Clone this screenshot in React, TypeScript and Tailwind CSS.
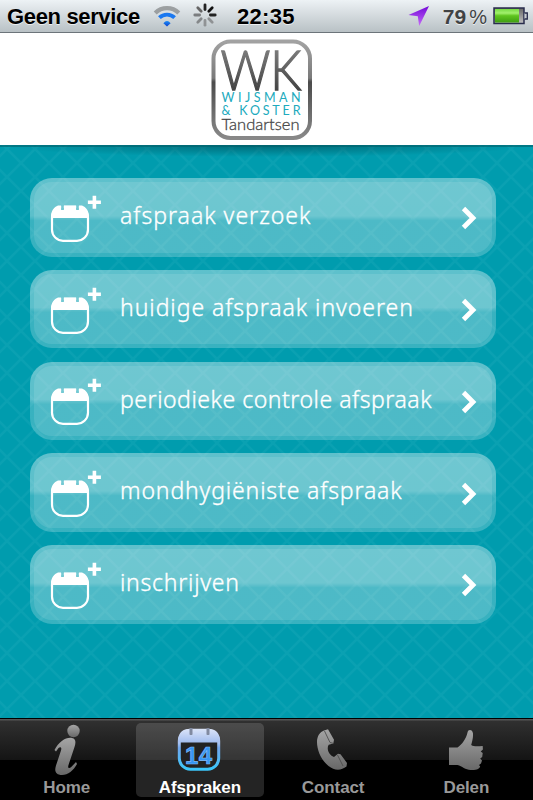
import type { ReactNode } from "react";

/* ── Status bar ─────────────────────────────────────────── */

function WifiIcon() {
  return (
    <svg width="28" height="22" viewBox="0 0 28 22" className="shrink-0">
      <defs>
        <linearGradient id="wifi" x1="0" y1="0" x2="0" y2="1">
          <stop offset="0" stopColor="#1d8cf5" />
          <stop offset="1" stopColor="#0a3fd0" />
        </linearGradient>
      </defs>
      <path d="M2.200 8a16.800 16.800 0 0 1 23.600 0" fill="none" stroke="#9b9fa1" strokeWidth="4.200" />
      <path d="M6.400 12.700a10.700 10.700 0 0 1 15.200 0" fill="none" stroke="#1a78f0" strokeWidth="3.800" />
      <path d="M14 21.500l-3.600-3.300q3.600-4.200 7.200 0z" fill="url(#wifi)" />
    </svg>
  );
}

const SPOKES = ["#222", "#111", "#222", "#8f9294", "#909395", "#85888a", "#7a7d7f", "#666"];

function Spinner() {
  return (
    <svg width="24" height="24" viewBox="-12 -12 24 24" className="shrink-0">
      {SPOKES.map((color, i) => (
        <line
          key={i}
          x1="0"
          y1="-5.4"
          x2="0"
          y2="-10.2"
          stroke={color}
          strokeWidth="2.8"
          strokeLinecap="round"
          transform={`rotate(${i * 45})`}
        />
      ))}
    </svg>
  );
}

function LocationArrow() {
  return (
    <svg width="22" height="22" viewBox="0 0 22 22" className="shrink-0">
      <defs>
        <linearGradient id="loc" x1="0" y1="0" x2="0" y2="1">
          <stop offset="0" stopColor="#7308d8" />
          <stop offset="1" stopColor="#c66cf8" />
        </linearGradient>
      </defs>
      <path d="M21 1L0.500 10l9.300 1.300L11.200 21z" fill="url(#loc)" />
    </svg>
  );
}

function Battery() {
  return (
    <svg width="36" height="18" viewBox="0 0 36 18" className="shrink-0">
      <defs>
        <linearGradient id="charge" x1="0" y1="0" x2="0" y2="1">
          <stop offset="0" stopColor="#77dc43" />
          <stop offset="0.3" stopColor="#a2f06d" />
          <stop offset="0.5" stopColor="#5fc51f" />
          <stop offset="1" stopColor="#3f9e12" />
        </linearGradient>
        <linearGradient id="empty" x1="0" y1="0" x2="0" y2="1">
          <stop offset="0" stopColor="#666" />
          <stop offset="1" stopColor="#c3c3c3" />
        </linearGradient>
      </defs>
      <rect x="1" y="1" width="30" height="15.5" fill="url(#empty)" stroke="#282d4c" strokeWidth="1.5" />
      <rect x="2" y="2" width="24" height="13.5" fill="url(#charge)" />
      <path d="M31.5 6h2.8v6h-2.8" fill="#c8cccf" stroke="#282d4c" strokeWidth="1.3" />
    </svg>
  );
}

function StatusBar() {
  return (
    <div className="flex h-[33px] items-center border-b border-[#6c747a] bg-linear-to-b from-[#edf2f5] to-[#b9c1c5] pl-[7px] pr-[4px] text-[22px] font-bold leading-none text-black [text-shadow:0_1px_0_rgba(255,255,255,0.7)]">
      <span className="w-[146px] shrink-0 whitespace-nowrap pt-[2px] tracking-[-0.35px]">Geen service</span>
      <WifiIcon />
      <span className="ml-[12px] mt-[-3px]">
        <Spinner />
      </span>
      <span className="ml-[20px] pt-[2px] tracking-[0.3px]">22:35</span>
      <span className="ml-auto">
        <LocationArrow />
      </span>
      <span className="ml-[13px] mr-[6px] whitespace-nowrap pt-[1px] text-[21px] text-[#404244]">
        79<span className="ml-[3px] text-[20px] font-normal">%</span>
      </span>
      <Battery />
    </div>
  );
}

/* ── Logo ───────────────────────────────────────────────── */

function Logo() {
  return (
    <svg width="102" height="102" viewBox="0 0 102 102" className="overflow-visible">
      <defs>
        <linearGradient id="frame" x1="0" y1="0" x2="0" y2="1">
          <stop offset="0" stopColor="#a2a2a2" />
          <stop offset="0.38" stopColor="#7a7a7a" />
          <stop offset="0.42" stopColor="#4b4b4b" />
          <stop offset="1" stopColor="#888" />
        </linearGradient>
        <linearGradient id="wk" x1="0" y1="0" x2="0" y2="1">
          <stop offset="0.2" stopColor="#7c7c7c" />
          <stop offset="0.8" stopColor="#454545" />
        </linearGradient>
      </defs>
      <rect x="2.5" y="2.5" width="96.5" height="96.5" rx="17" fill="#fff" stroke="url(#frame)" strokeWidth="4" />
      <g fontFamily="Lato, 'Liberation Sans', sans-serif">
        <text x="9.500" y="50.500" fontSize="55" fontWeight="300" textLength="81" lengthAdjust="spacingAndGlyphs" fill="url(#wk)" stroke="url(#wk)" strokeWidth="1.300">
          WK
        </text>
        <text x="10.500" y="63.300" fontSize="12.500" textLength="79" fill="#20aabd">
          WIJSMAN
        </text>
        <text x="10.500" y="75.500" fontSize="12.500" textLength="79" fill="#20aabd">
          &amp; KOSTER
        </text>
        <text x="10.500" y="91" fontSize="16" fontWeight="300" textLength="78" lengthAdjust="spacingAndGlyphs" fill="#3c3c3c" stroke="#4c4c4c" strokeWidth="0.300">
          Tandartsen
        </text>
      </g>
    </svg>
  );
}

/* ── Menu ───────────────────────────────────────────────── */

function CalendarPlus() {
  return (
    <svg width="52" height="50" viewBox="0 0 52 50" className="mt-[3px] shrink-0">
      <rect x="2" y="12.8" width="36" height="34" rx="11" fill="none" stroke="#fff" strokeWidth="2.2" />
      <path
        d="M1 24v-1.500c0-5.500 3-9.500 7-11h3.200v4.500h2.600v-4.500h12.400v4.500h2.600v-4.500h3.200c4 1.500 7 5.500 7 11v1.500z"
        fill="#fff"
      />
      <path d="M11.200 11h2.600v4.500h-2.600zM26.200 11h2.600v4.500h-2.600z" fill="#74c9d3" />
      <path d="M42.600 1.800h3.600v4.700h4.700v3.600h-4.700v4.700h-3.600v-4.700h-4.700v-3.600h4.700z" fill="#fff" />
    </svg>
  );
}

function Chevron() {
  return (
    <svg width="16" height="24" viewBox="0 0 16 24" className="mt-[2px] shrink-0">
      <path d="M2.500 2.500l9.500 9.500-9.500 9.500" fill="none" stroke="#fff" strokeWidth="4.800" />
    </svg>
  );
}

interface MenuItem {
  label: string;
  spacing: string;
}

const ITEMS: MenuItem[] = [
  { label: "afspraak verzoek", spacing: "tracking-[1px]" },
  { label: "huidige afspraak invoeren", spacing: "tracking-[0.95px]" },
  { label: "periodieke controle afspraak", spacing: "tracking-[0.53px]" },
  { label: "mondhygiëniste afspraak", spacing: "tracking-[0.85px]" },
  { label: "inschrijven", spacing: "tracking-[0.75px]" },
];

function MenuButton({ label, spacing }: MenuItem) {
  return (
    <button className="h-[78.5px] w-full rounded-[22px] bg-linear-to-b from-white/37 from-0% via-white/36 via-48% to-white/22 to-54% p-[4px] text-left">
      <span className="flex h-full items-center rounded-[18px] bg-white/11 pl-[16px] pr-[15px]">
        <CalendarPlus />
        <span
          className={`ml-[18px] mt-[-4px] flex-1 whitespace-nowrap font-['Noto_Sans','Open_Sans',sans-serif] text-[23px] font-light text-white [-webkit-text-stroke:0.35px_white] ${spacing}`}
        >
          {label}
        </span>
        <Chevron />
      </span>
    </button>
  );
}

/* ── Tab bar ────────────────────────────────────────────── */

function TabGradient() {
  return (
    <svg width="0" height="0" className="absolute">
      <defs>
        <linearGradient id="tab" x1="0" y1="0" x2="0" y2="1">
          <stop offset="0" stopColor="#a5a5a5" />
          <stop offset="1" stopColor="#686868" />
        </linearGradient>
        <linearGradient id="tabBlue" x1="0" y1="0" x2="0" y2="1">
          <stop offset="0" stopColor="#dbe4f8" />
          <stop offset="0.3" stopColor="#b5c9f1" />
          <stop offset="0.45" stopColor="#72a7ed" />
          <stop offset="1" stopColor="#3bc6fa" />
        </linearGradient>
        <linearGradient id="tabBand" x1="0" y1="0" x2="0" y2="1">
          <stop offset="0" stopColor="#dbe4f8" />
          <stop offset="1" stopColor="#a3bdee" />
        </linearGradient>
      </defs>
    </svg>
  );
}

function InfoIcon() {
  return (
    <svg width="28" height="52" viewBox="0 0 28 52">
      <circle cx="20.500" cy="7" r="6.200" fill="url(#tab)" />
      <path
        d="M1.500 26C6 17.500 13 13 19 14c4 .8 4 4.500 2.500 9L15.500 41c-1 3 .5 3.800 2.500 2.300l5-5.300 1 2C20.500 46.500 15 51 9 51c-6 0-8-3.500-6-9.500L8 26.500c1-3-.5-4-2.500-2.500L3 27.500z"
        fill="url(#tab)"
      />
    </svg>
  );
}

function CalendarIcon() {
  return (
    <svg width="44" height="44" viewBox="0 0 44 44" className="mr-[2px]">
      <rect x="2.3" y="2.3" width="39.4" height="38.9" rx="11" fill="#222" stroke="url(#tabBlue)" strokeWidth="3" />
      <path d="M1 13Q1.500 1 12 1h20q10.500 0 11 12v1.500H1z" fill="url(#tabBand)" />
      <path d="M12.500 0v6.500q1.500 1 3 0V0M29.500 0v6.500q1.500 1 3 0V0" fill="#818aa0" />
      <text
        x="8"
        y="35.5"
        fontSize="24"
        fontWeight="700"
        textLength="27"
        fontFamily="'Liberation Sans', sans-serif"
        fill="#3595f4"
        stroke="#7fb9f8"
        strokeWidth="0.7"
      >
        14
      </text>
    </svg>
  );
}

function PhoneIcon() {
  return (
    <svg width="32" height="42" viewBox="0 0 32 42">
      <path
        d="M7 1.500l4-1.300 6 10.500-.7 3.800-4.600 1.200c-2.200 3.200-.7 9.800 5.300 12.200l4-3.200 2.500.5L30 34l-.5 3.500c-5 4-12 4.500-18-.5C4 31 0 21 0 13 0 7 3 3 7 1.500z"
        fill="url(#tab)"
      />
      <path d="M7.500 2l5.500 11.500 3.200.8M20.500 26l5.500 11" fill="none" stroke="#4d4d4d" strokeWidth="0.9" />
    </svg>
  );
}

function ThumbIcon() {
  return (
    <svg width="36" height="42" viewBox="0 0 36 42">
      <path
        d="M1 18.500h8.500C14 15.500 18 10 19.500 3.500 20 0 24.500.2 25 4.500c.3 4-.8 8-1.800 11.500 3 2 7 1.200 11.500 1l.2 3.500-2.200 2 2 1.500-.5 4-2 1.500 1.800 2-1 3-2 1.500 1.200 1.500c-1 3-4.700 3.500-9.700 3.500-5 0-8.500-4-13-5H1z"
        fill="url(#tab)"
      />
    </svg>
  );
}

function Tab({ label, icon, active }: { label: string; icon: ReactNode; active?: boolean }) {
  return (
    <div
      className={`mx-[3px] mb-[3px] mt-[4px] flex flex-1 flex-col items-center justify-between rounded-[5px] ${
        active ? "bg-white/14 text-white" : "text-[#999]"
      }`}
    >
      <div className="flex h-[54px] items-center justify-center">{icon}</div>
      <span className="pb-[1px] text-[17px] font-bold leading-[17px] tracking-[-0.1px]">{label}</span>
    </div>
  );
}

/* ── Screen ─────────────────────────────────────────────── */

export default function App() {
  return (
    <div className="flex h-[800px] w-[533px] flex-col overflow-hidden bg-white font-['Liberation_Sans',Arial,sans-serif]">
      <StatusBar />

      <header className="flex h-[112px] shrink-0 justify-center bg-white pr-[10px] pt-[6px]">
        <Logo />
      </header>

      <main className="relative flex-1 bg-[#009cae]">
        {/* Diamond lattice */}
        <svg className="absolute inset-0 h-full w-full">
          <defs>
            <pattern id="lattice" width="28" height="28" patternUnits="userSpaceOnUse" x="7" y="4">
              <path d="M-2 -2L30 30M-2 30L30 -2" stroke="#1aa8b9" strokeOpacity="0.4" strokeWidth="2.6" />
            </pattern>
          </defs>
          <rect width="100%" height="100%" fill="url(#lattice)" />
        </svg>
        <div className="absolute inset-x-0 top-0 h-[12px] bg-[radial-gradient(ellipse_50%_100%_at_50%_0,rgba(0,70,80,0.6),transparent)]" />
        <div className="absolute inset-x-0 top-0 h-[2px] bg-[#00606b]/60" />
        <div className="relative flex flex-col gap-[13.25px] pl-[30px] pr-[37px] pt-[33px]">
          {ITEMS.map((item) => (
            <MenuButton key={item.label} {...item} />
          ))}
        </div>
      </main>

      <nav className="flex h-[82px] shrink-0 border-t border-black bg-[linear-gradient(to_bottom,#555_0,#555_1px,#303030_2px,#141414_41px,#000_41px)]">
        <TabGradient />
        <Tab label="Home" icon={<InfoIcon />} />
        <Tab label="Afspraken" icon={<CalendarIcon />} active />
        <Tab label="Contact" icon={<PhoneIcon />} />
        <Tab label="Delen" icon={<ThumbIcon />} />
      </nav>
    </div>
  );
}
